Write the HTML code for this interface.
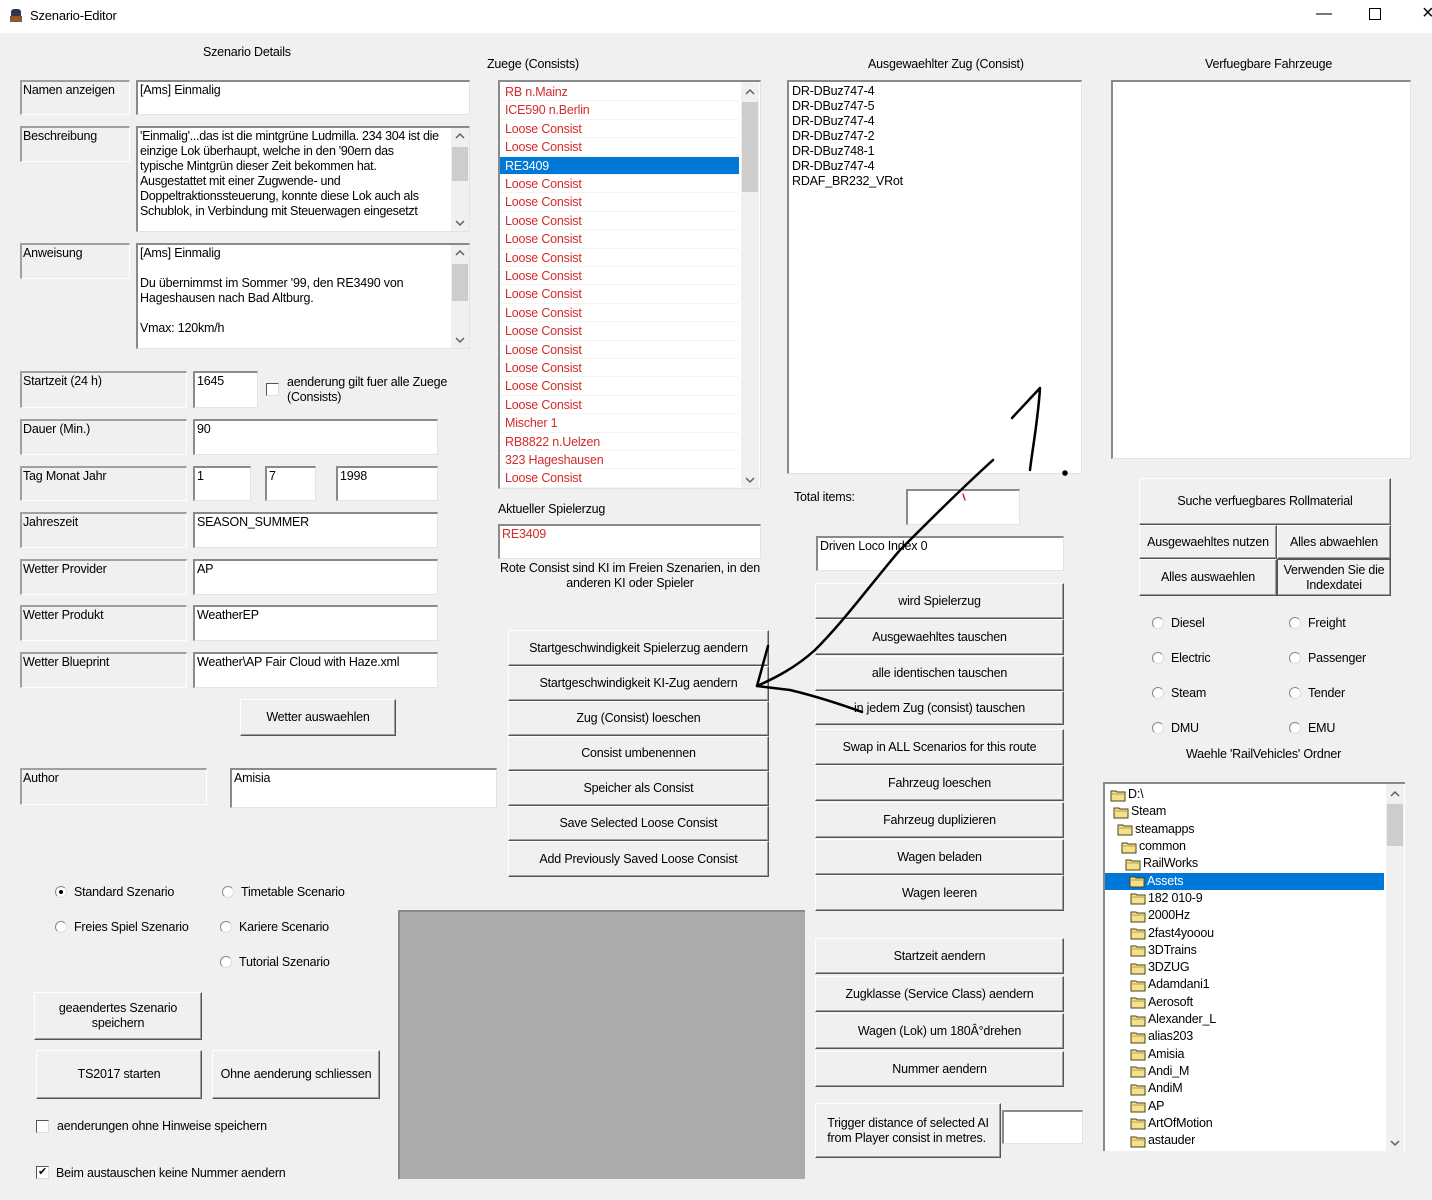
<!DOCTYPE html>
<html><head><meta charset="utf-8"><style>
*{box-sizing:border-box;margin:0;padding:0}
body{width:1432px;height:1200px;background:#f0f0f0;font-family:"Liberation Sans",sans-serif;font-size:12.5px;letter-spacing:-0.2px;color:#000;position:relative;overflow:hidden}
.a{position:absolute}
.lb{position:absolute;border-top:2px solid #a0a0a0;border-left:2px solid #a0a0a0;border-right:1px solid #fff;border-bottom:1px solid #fff;padding:1px 1px;line-height:15px;white-space:nowrap}
.tb{position:absolute;background:#fff;border-top:2px solid #8a8a8a;border-left:2px solid #8a8a8a;border-right:1px solid #e3e3e3;border-bottom:1px solid #e3e3e3;padding:1px 2px;line-height:15px;white-space:nowrap;overflow:hidden}
.bt{position:absolute;background:#f0f0f0;border:1px solid;border-color:#fff #555 #555 #fff;box-shadow:inset -1px -1px #a0a0a0;display:flex;align-items:center;justify-content:center;text-align:center;line-height:15px}
.sb{position:absolute;width:18px;background:#f0f0f0}
.sb .th{position:absolute;left:1px;width:16px;background:#cdcdcd}
.sb .u,.sb .d{position:absolute;left:0;width:18px;height:17px}
.rd{position:absolute;width:12px;height:12px;border-radius:50%;border:1px solid #888;border-right-color:#ddd;border-bottom-color:#ddd;background:#fff}
.ck{position:absolute;width:13px;height:13px;border:1px solid #555;border-right-color:#ddd;border-bottom-color:#ddd;background:#fff}
.li{position:absolute;left:0;right:0;height:18.4px;line-height:18px;padding-left:5px;color:#d42b2b;border-bottom:1px solid #f4f4f4}
.tr{position:absolute;height:17.3px;line-height:17px;display:flex;align-items:center;white-space:nowrap}
.tr svg{margin-right:1px}
</style></head><body>
<svg width="0" height="0" style="position:absolute"><defs>
<symbol id="fo" viewBox="0 0 17 14"><path d="M1 3h5l1 1h8v9H1z" fill="#f4e18c" stroke="#4a4020"/><path d="M1 6h14" stroke="#b8a050"/></symbol>
<symbol id="up" viewBox="0 0 18 17"><path d="M5 10l4-4 4 4" fill="none" stroke="#606060" stroke-width="1.5"/></symbol>
<symbol id="dn" viewBox="0 0 18 17"><path d="M5 7l4 4 4-4" fill="none" stroke="#606060" stroke-width="1.5"/></symbol>
</defs></svg>
<!-- title bar -->
<div class="a" style="left:0;top:0;width:1432px;height:33px;background:#fff"></div>
<svg class="a" style="left:9px;top:7px" width="14" height="17"><rect x="2" y="2" width="10" height="13" rx="3" fill="#2a3550"/><rect x="1" y="9" width="12" height="6" fill="#8b5a2b"/></svg>
<div class="a" style="left:30px;top:8px;font-size:13px">Szenario-Editor</div>
<div class="a" style="left:1316px;top:5px;font-size:16px">&#8212;</div>
<div class="a" style="left:1369px;top:8px;width:12px;height:12px;border:1px solid #000"></div>
<div class="a" style="left:1422px;top:2px;font-size:20px">×</div>

<!-- left column -->
<div class="a" style="left:203px;top:45px">Szenario Details</div>
<div class="lb" style="left:20px;top:80px;width:110px;height:35px">Namen anzeigen</div>
<div class="tb" style="left:136px;top:80px;width:334px;height:35px">[Ams] Einmalig</div>
<div class="lb" style="left:20px;top:126px;width:110px;height:36px">Beschreibung</div>
<div class="tb" style="left:136px;top:126px;width:334px;height:106px;letter-spacing:-0.3px">'Einmalig'...das ist die mintgrüne Ludmilla. 234 304 ist die<br>einzige Lok überhaupt, welche in den '90ern das<br>typische Mintgrün dieser Zeit bekommen hat.<br>Ausgestattet mit einer Zugwende- und<br>Doppeltraktionssteuerung, konnte diese Lok auch als<br>Schublok, in Verbindung mit Steuerwagen eingesetzt
<div class="sb" style="right:0;top:0;height:103px"><svg class="u" style="top:0"><use href="#up"/></svg><div class="th" style="top:19px;height:34px"></div><svg class="d" style="bottom:0"><use href="#dn"/></svg></div></div>
<div class="lb" style="left:20px;top:243px;width:110px;height:36px">Anweisung</div>
<div class="tb" style="left:136px;top:243px;width:334px;height:106px;white-space:normal">[Ams] Einmalig<br><br>Du übernimmst im Sommer '99, den RE3490 von Hageshausen nach Bad Altburg.<br><br>Vmax: 120km/h
<div class="sb" style="right:0;top:0;height:103px"><svg class="u" style="top:0"><use href="#up"/></svg><div class="th" style="top:19px;height:37px"></div><svg class="d" style="bottom:0"><use href="#dn"/></svg></div></div>

<div class="lb" style="left:20px;top:371px;width:167px;height:37px">Startzeit (24 h)</div>
<div class="tb" style="left:193px;top:371px;width:65px;height:37px">1645</div>
<div class="ck" style="left:266px;top:383px"></div>
<div class="a" style="left:287px;top:375px;line-height:15px">aenderung gilt fuer alle Zuege<br>(Consists)</div>
<div class="lb" style="left:20px;top:419px;width:167px;height:36px">Dauer (Min.)</div>
<div class="tb" style="left:193px;top:419px;width:245px;height:36px">90</div>
<div class="lb" style="left:20px;top:466px;width:167px;height:35px">Tag Monat Jahr</div>
<div class="tb" style="left:193px;top:466px;width:58px;height:35px">1</div>
<div class="tb" style="left:265px;top:466px;width:51px;height:35px">7</div>
<div class="tb" style="left:336px;top:466px;width:102px;height:35px">1998</div>
<div class="lb" style="left:20px;top:512px;width:167px;height:36px">Jahreszeit</div>
<div class="tb" style="left:193px;top:512px;width:245px;height:36px">SEASON_SUMMER</div>
<div class="lb" style="left:20px;top:559px;width:167px;height:36px">Wetter Provider</div>
<div class="tb" style="left:193px;top:559px;width:245px;height:36px">AP</div>
<div class="lb" style="left:20px;top:605px;width:167px;height:36px">Wetter Produkt</div>
<div class="tb" style="left:193px;top:605px;width:245px;height:36px">WeatherEP</div>
<div class="lb" style="left:20px;top:652px;width:167px;height:36px">Wetter Blueprint</div>
<div class="tb" style="left:193px;top:652px;width:245px;height:36px">Weather\AP Fair Cloud with Haze.xml</div>
<div class="bt" style="left:240px;top:699px;width:156px;height:37px">Wetter auswaehlen</div>
<div class="lb" style="left:20px;top:768px;width:187px;height:37px">Author</div>
<div class="tb" style="left:230px;top:768px;width:267px;height:40px">Amisia</div>

<div class="rd" style="left:55px;top:886px"><div class="a" style="left:3px;top:3px;width:4px;height:4px;border-radius:50%;background:#000"></div></div>
<div class="a" style="left:74px;top:885px">Standard Szenario</div>
<div class="rd" style="left:222px;top:886px"></div><div class="a" style="left:241px;top:885px">Timetable Scenario</div>
<div class="rd" style="left:55px;top:921px"></div><div class="a" style="left:74px;top:920px">Freies Spiel Szenario</div>
<div class="rd" style="left:220px;top:921px"></div><div class="a" style="left:239px;top:920px">Kariere Scenario</div>
<div class="rd" style="left:220px;top:956px"></div><div class="a" style="left:239px;top:955px">Tutorial Szenario</div>
<div class="bt" style="left:34px;top:992px;width:168px;height:48px">geaendertes Szenario<br>speichern</div>
<div class="bt" style="left:36px;top:1050px;width:166px;height:49px">TS2017 starten</div>
<div class="bt" style="left:212px;top:1050px;width:168px;height:49px">Ohne aenderung schliessen</div>
<div class="ck" style="left:36px;top:1120px"></div><div class="a" style="left:57px;top:1119px">aenderungen ohne Hinweise speichern</div>
<div class="ck" style="left:36px;top:1166px;font-size:11px;line-height:10px;text-align:center">✔</div><div class="a" style="left:56px;top:1166px">Beim austauschen keine Nummer aendern</div>
<div class="a" style="left:398px;top:910px;width:407px;height:269px;background:#ababab;border-top:2px solid #8a8a8a;border-left:2px solid #8a8a8a"></div>

<!-- consists -->
<div class="a" style="left:487px;top:57px">Zuege (Consists)</div>
<div class="a" style="left:498px;top:80px;width:263px;height:409px;background:#fff;border-top:2px solid #8a8a8a;border-left:2px solid #8a8a8a;border-right:1px solid #e3e3e3;border-bottom:1px solid #e3e3e3;overflow:hidden">
<div style="position:absolute;left:0;top:1px;width:239px;height:405px">
<div class="li" style="top:0">RB n.Mainz</div>
<div class="li" style="top:18.4px">ICE590 n.Berlin</div>
<div class="li" style="top:36.8px">Loose Consist</div>
<div class="li" style="top:55.2px">Loose Consist</div>
<div class="li" style="top:73.6px;background:#0078d7;color:#fff">RE3409</div>
<div class="li" style="top:92px">Loose Consist</div>
<div class="li" style="top:110.4px">Loose Consist</div>
<div class="li" style="top:128.8px">Loose Consist</div>
<div class="li" style="top:147.2px">Loose Consist</div>
<div class="li" style="top:165.6px">Loose Consist</div>
<div class="li" style="top:184px">Loose Consist</div>
<div class="li" style="top:202.4px">Loose Consist</div>
<div class="li" style="top:220.8px">Loose Consist</div>
<div class="li" style="top:239.2px">Loose Consist</div>
<div class="li" style="top:257.6px">Loose Consist</div>
<div class="li" style="top:276px">Loose Consist</div>
<div class="li" style="top:294.4px">Loose Consist</div>
<div class="li" style="top:312.8px">Loose Consist</div>
<div class="li" style="top:331.2px">Mischer 1</div>
<div class="li" style="top:349.6px">RB8822 n.Uelzen</div>
<div class="li" style="top:368px">323 Hageshausen</div>
<div class="li" style="top:386.4px">Loose Consist</div>
</div>
<div class="sb" style="left:241px;top:0;height:406px"><svg class="u" style="top:2px"><use href="#up"/></svg><div class="th" style="top:20px;height:90px"></div><svg class="d" style="bottom:0"><use href="#dn"/></svg></div>
</div>
<div class="a" style="left:498px;top:502px">Aktueller Spielerzug</div>
<div class="tb" style="left:498px;top:524px;width:263px;height:35px;color:#d42b2b">RE3409</div>
<div class="a" style="left:495px;top:561px;width:270px;text-align:center;line-height:15px">Rote Consist sind KI im Freien Szenarien, in den anderen KI oder Spieler</div>
<div class="bt" style="left:508px;top:630px;width:261px;height:36px">Startgeschwindigkeit Spielerzug aendern</div>
<div class="bt" style="left:508px;top:666px;width:261px;height:35px">Startgeschwindigkeit KI-Zug aendern</div>
<div class="bt" style="left:508px;top:701px;width:261px;height:35px">Zug (Consist) loeschen</div>
<div class="bt" style="left:508px;top:736px;width:261px;height:35px">Consist umbenennen</div>
<div class="bt" style="left:508px;top:771px;width:261px;height:35px">Speicher als Consist</div>
<div class="bt" style="left:508px;top:806px;width:261px;height:35px">Save Selected Loose Consist</div>
<div class="bt" style="left:508px;top:841px;width:261px;height:36px">Add Previously Saved Loose Consist</div>

<!-- selected consist -->
<div class="a" style="left:868px;top:57px">Ausgewaehlter Zug (Consist)</div>
<div class="a" style="left:787px;top:80px;width:295px;height:394px;background:#fff;border-top:2px solid #8a8a8a;border-left:2px solid #8a8a8a;border-right:1px solid #e3e3e3;border-bottom:1px solid #e3e3e3;padding:2px 3px;line-height:15px">DR-DBuz747-4<br>DR-DBuz747-5<br>DR-DBuz747-4<br>DR-DBuz747-2<br>DR-DBuz748-1<br>DR-DBuz747-4<br>RDAF_BR232_VRot</div>
<div class="a" style="left:794px;top:490px">Total items:</div>
<div class="tb" style="left:906px;top:489px;width:114px;height:36px"></div>
<div class="tb" style="left:816px;top:536px;width:248px;height:35px">Driven Loco Index 0</div>
<div class="bt" style="left:815px;top:583px;width:249px;height:36px">wird Spielerzug</div>
<div class="bt" style="left:815px;top:619px;width:249px;height:36px">Ausgewaehltes tauschen</div>
<div class="bt" style="left:815px;top:656px;width:249px;height:35px">alle identischen tauschen</div>
<div class="bt" style="left:815px;top:691px;width:249px;height:34px">in jedem Zug (consist) tauschen</div>
<div class="bt" style="left:815px;top:729px;width:249px;height:36px">Swap in ALL Scenarios for this route</div>
<div class="bt" style="left:815px;top:765px;width:249px;height:36px">Fahrzeug loeschen</div>
<div class="bt" style="left:815px;top:802px;width:249px;height:36px">Fahrzeug duplizieren</div>
<div class="bt" style="left:815px;top:839px;width:249px;height:36px">Wagen beladen</div>
<div class="bt" style="left:815px;top:875px;width:249px;height:36px">Wagen leeren</div>
<div class="bt" style="left:815px;top:938px;width:249px;height:36px">Startzeit aendern</div>
<div class="bt" style="left:815px;top:976px;width:249px;height:36px">Zugklasse (Service Class) aendern</div>
<div class="bt" style="left:815px;top:1013px;width:249px;height:36px">Wagen (Lok) um 180Â°drehen</div>
<div class="bt" style="left:815px;top:1051px;width:249px;height:36px">Nummer aendern</div>
<div class="bt" style="left:815px;top:1103px;width:186px;height:55px;text-align:left">Trigger distance of selected AI<br>from Player consist in metres.</div>
<div class="tb" style="left:1002px;top:1110px;width:81px;height:34px"></div>

<!-- right column -->
<div class="a" style="left:1205px;top:57px">Verfuegbare Fahrzeuge</div>
<div class="a" style="left:1111px;top:80px;width:300px;height:379px;background:#fff;border-top:2px solid #8a8a8a;border-left:2px solid #8a8a8a;border-right:1px solid #e3e3e3;border-bottom:1px solid #e3e3e3"></div>
<div class="bt" style="left:1139px;top:478px;width:252px;height:47px">Suche verfuegbares Rollmaterial</div>
<div class="bt" style="left:1139px;top:525px;width:138px;height:34px">Ausgewaehltes nutzen</div>
<div class="bt" style="left:1277px;top:525px;width:114px;height:34px">Alles abwaehlen</div>
<div class="bt" style="left:1139px;top:559px;width:138px;height:37px">Alles auswaehlen</div>
<div class="bt" style="left:1277px;top:559px;width:114px;height:37px;border-color:#555 #555 #555 #555">Verwenden Sie die<br>Indexdatei</div>
<div class="rd" style="left:1152px;top:617px"></div><div class="a" style="left:1171px;top:616px">Diesel</div>
<div class="rd" style="left:1289px;top:617px"></div><div class="a" style="left:1308px;top:616px">Freight</div>
<div class="rd" style="left:1152px;top:652px"></div><div class="a" style="left:1171px;top:651px">Electric</div>
<div class="rd" style="left:1289px;top:652px"></div><div class="a" style="left:1308px;top:651px">Passenger</div>
<div class="rd" style="left:1152px;top:687px"></div><div class="a" style="left:1171px;top:686px">Steam</div>
<div class="rd" style="left:1289px;top:687px"></div><div class="a" style="left:1308px;top:686px">Tender</div>
<div class="rd" style="left:1152px;top:722px"></div><div class="a" style="left:1171px;top:721px">DMU</div>
<div class="rd" style="left:1289px;top:722px"></div><div class="a" style="left:1308px;top:721px">EMU</div>
<div class="a" style="left:1186px;top:747px">Waehle 'RailVehicles' Ordner</div>

<div class="a" style="left:1103px;top:782px;width:302px;height:369px;background:#fff;border-top:2px solid #8a8a8a;border-left:2px solid #8a8a8a;overflow:hidden">
<div class="tr" style="left:5px;top:2px"><svg width="17" height="14"><use href="#fo"/></svg>D:\</div>
<div class="tr" style="left:8px;top:19.3px"><svg width="17" height="14"><use href="#fo"/></svg>Steam</div>
<div class="tr" style="left:12px;top:36.6px"><svg width="17" height="14"><use href="#fo"/></svg>steamapps</div>
<div class="tr" style="left:16px;top:53.9px"><svg width="17" height="14"><use href="#fo"/></svg>common</div>
<div class="tr" style="left:20px;top:71.2px"><svg width="17" height="14"><use href="#fo"/></svg>RailWorks</div>
<div class="a" style="left:0;top:88.5px;width:279px;height:17px;background:#0078d7"></div>
<div class="tr" style="left:24px;top:88.5px;color:#fff"><svg width="17" height="14"><use href="#fo"/></svg>Assets</div>
<div class="tr" style="left:25px;top:105.8px"><svg width="17" height="14"><use href="#fo"/></svg>182 010-9</div>
<div class="tr" style="left:25px;top:123.1px"><svg width="17" height="14"><use href="#fo"/></svg>2000Hz</div>
<div class="tr" style="left:25px;top:140.4px"><svg width="17" height="14"><use href="#fo"/></svg>2fast4yooou</div>
<div class="tr" style="left:25px;top:157.7px"><svg width="17" height="14"><use href="#fo"/></svg>3DTrains</div>
<div class="tr" style="left:25px;top:175px"><svg width="17" height="14"><use href="#fo"/></svg>3DZUG</div>
<div class="tr" style="left:25px;top:192.3px"><svg width="17" height="14"><use href="#fo"/></svg>Adamdani1</div>
<div class="tr" style="left:25px;top:209.6px"><svg width="17" height="14"><use href="#fo"/></svg>Aerosoft</div>
<div class="tr" style="left:25px;top:226.9px"><svg width="17" height="14"><use href="#fo"/></svg>Alexander_L</div>
<div class="tr" style="left:25px;top:244.2px"><svg width="17" height="14"><use href="#fo"/></svg>alias203</div>
<div class="tr" style="left:25px;top:261.5px"><svg width="17" height="14"><use href="#fo"/></svg>Amisia</div>
<div class="tr" style="left:25px;top:278.8px"><svg width="17" height="14"><use href="#fo"/></svg>Andi_M</div>
<div class="tr" style="left:25px;top:296.1px"><svg width="17" height="14"><use href="#fo"/></svg>AndiM</div>
<div class="tr" style="left:25px;top:313.4px"><svg width="17" height="14"><use href="#fo"/></svg>AP</div>
<div class="tr" style="left:25px;top:330.7px"><svg width="17" height="14"><use href="#fo"/></svg>ArtOfMotion</div>
<div class="tr" style="left:25px;top:348px"><svg width="17" height="14"><use href="#fo"/></svg>astauder</div>
<div class="sb" style="left:281px;top:0;height:367px"><svg class="u" style="top:2px"><use href="#up"/></svg><div class="th" style="top:20px;height:42px"></div><svg class="d" style="bottom:0"><use href="#dn"/></svg></div>
</div>

<!-- freehand annotation -->
<svg class="a" style="left:0;top:0" width="1432" height="1200" fill="none" stroke="#000" stroke-width="2.5" stroke-linecap="round" stroke-linejoin="round">
<path d="M993 460 C960 490 930 520 900 550 C870 585 845 620 815 650 C795 668 775 678 757 686"/>
<path d="M757 686 L768 646 M757 686 L790 690 C815 696 840 704 862 712"/>
<path d="M1012 418 L1040 388 C1038 420 1033 445 1030 470"/>
<circle cx="1065" cy="473" r="1.5" fill="#000"/>
<path d="M963 494 l2 6" stroke="#d42b2b" stroke-width="1.5"/>
</svg>
</body></html>
